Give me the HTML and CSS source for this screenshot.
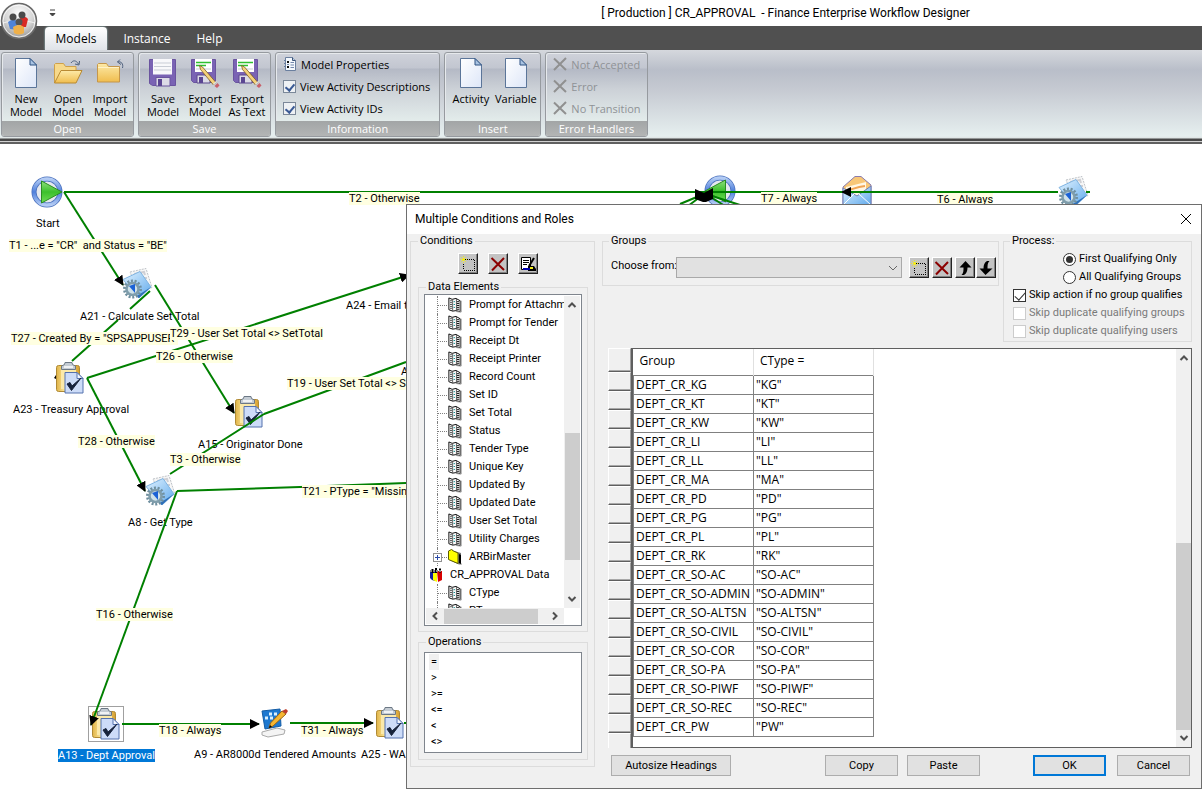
FILE: index.html
```html
<!DOCTYPE html>
<html lang="en">
<head>
<meta charset="utf-8">
<title>Finance Enterprise Workflow Designer</title>
<link rel="stylesheet" href="styles.css">
</head>
<body>
<svg class="defs" aria-hidden="true">
  <defs>
    <linearGradient id="gFolder" x1="0" y1="0" x2="0" y2="1"><stop offset="0" stop-color="#fdeaa8"/><stop offset="1" stop-color="#f0bd4e"/></linearGradient>
    <linearGradient id="gPage" x1="0" y1="0" x2="1" y2="1"><stop offset="0" stop-color="#fff"/><stop offset="1" stop-color="#dde6f8"/></linearGradient>
    <linearGradient id="gGreen" x1="0" y1="0" x2="0" y2="1"><stop offset="0" stop-color="#8fe07e"/><stop offset=".5" stop-color="#3cc02c"/><stop offset="1" stop-color="#6fdc55"/></linearGradient>
    <linearGradient id="gRing" x1="0" y1="0" x2="0" y2="1"><stop offset="0" stop-color="#b4ccf4"/><stop offset=".5" stop-color="#4f80dc"/><stop offset="1" stop-color="#b4ccf4"/></linearGradient>
    <linearGradient id="gBlue" x1="0" y1="0" x2="1" y2="1"><stop offset="0" stop-color="#e2f3ff"/><stop offset="1" stop-color="#5fa9ec"/></linearGradient>
    <linearGradient id="gGold" x1="0" y1="0" x2="1" y2="0"><stop offset="0" stop-color="#e0b347"/><stop offset=".35" stop-color="#fbe597"/><stop offset="1" stop-color="#d7a02f"/></linearGradient>
    <radialGradient id="gOrb" cx=".5" cy=".3" r=".75"><stop offset="0" stop-color="#fff"/><stop offset=".55" stop-color="#d4d4d4"/><stop offset="1" stop-color="#8b8b8b"/></radialGradient>
    <marker id="arrow" viewBox="0 0 10 10" refX="9" refY="5" markerWidth="10" markerHeight="10" markerUnits="userSpaceOnUse" orient="auto"><path d="M0 0 10 5 0 10Z"/></marker>

    <symbol id="page" viewBox="0 0 24 30"><path d="M1.500 .5h14.500l6.500 6.500v22.500h-21Z" fill="url(#gPage)" stroke="#5b7599"/><path d="M16 .5v6.500h6.500Z" fill="#a9c3e2" stroke="#2f5282"/></symbol>
    <symbol id="open" viewBox="0 0 30 30"><path d="M1.500 25V6.500l1-1h8l2 3h10.500v6" fill="#f7d98b" stroke="#cfa04a"/><path d="M1.500 25 8 12.500h21L23 25Z" fill="url(#gFolder)" stroke="#b98a33"/><path d="M18 5c2-3 5-3 7.500 1" fill="none" stroke="#4d607d"/><path d="m26.500 3-.5 4-4-1" fill="none" stroke="#4d607d"/></symbol>
    <symbol id="import" viewBox="0 0 30 30"><path d="M2.500 24V6.500l1-1h8l2 3h11V24Z" fill="url(#gFolder)" stroke="#c5964a"/><path d="M3 9.500h21" stroke="#fff2c6"/><path d="M22.500 4c4-1 6 2 5 6M25 1.500 22.500 4l3.500 2.500" fill="none" stroke="#4d607d"/></symbol>
    <symbol id="disk" viewBox="0 0 30 30"><path d="M1.500 1.500h26v26h-23l-3-2Z" fill="#7a63b4" stroke="#6a549f"/><path d="M5 1h19v15.500H5Z" fill="#f8f8fb"/><path d="M6 5h17M6 8.500h17M6 12h17" stroke="#c9cdd6"/><path d="M8 19.500h14V28H8Z" fill="#dcdbe6" stroke="#6a549f"/><path d="M10 21h4v7h-4Z" fill="#5b4692"/></symbol>
    <symbol id="diskpen" viewBox="0 0 30 30"><path d="M1.500 1.500h24v23h-22l-2-2Z" fill="#7a63b4" stroke="#6a549f"/><path d="M5 1h17v13H5Z" fill="#fff"/><path d="M6 4.500h15M6 7.500h10" stroke="#2fc02f" stroke-width="1.500"/><path d="M6 11h15" stroke="#c9cdd6"/><path d="M7 17h13v8H7Z" fill="#dcdbe6" stroke="#5d488f"/><path d="M9 19h4v6H9Z" fill="#5b4692"/><path d="m9.500 7.500 3 1.500L26 24.500 23.500 27 10.500 11.500Z" fill="#f5d27a" stroke="#7d5d25" stroke-width=".8"/><path d="m24.500 28 3-3 2 2.500-2.500 2.500Z" fill="#c9606a"/><path d="m23.500 26.500 3-3" stroke="#ddd" stroke-width="1.500"/></symbol>
    <symbol id="props" viewBox="0 0 14 14"><path d="M2.500 .5h7l3 3v10h-10Z" fill="#f4f8fd" stroke="#6a7f9f"/><path d="M9.500 .5v3h3" fill="#b8cbe2" stroke="#3e5578"/><path d="M4 5h2M4 10h2" stroke="#111" stroke-width="2"/><path d="M7.500 5.500h3.500M7.500 8h3.500M7.500 10.500h3.500M4 7.500h2" stroke="#7589ad"/><path d="M1 3.500h2M1 6.500h2M1 9.500h2" stroke="#687d9e"/></symbol>
    <symbol id="cross" viewBox="0 0 14 14"><path d="M1 1.500 13 13M13 1 1 13" stroke="#909090" stroke-width="2" fill="none"/></symbol>

    <symbol id="play" viewBox="0 0 32 32"><circle cx="16" cy="16" r="13" fill="#e4e8ee" stroke="#4a70bd" stroke-width="5"/><circle cx="16" cy="16" r="13" fill="none" stroke="url(#gRing)" stroke-width="3.500"/><path d="M10.500 5 31 16 10.500 27Z" fill="url(#gGreen)" stroke="#2a8d22"/></symbol>
    <symbol id="gear" viewBox="0 0 32 32"><path d="m8 4 16-3.500 6 19-13 5Z" fill="#f6f6f6" stroke="#bfc3c8" stroke-dasharray="2 1"/><path d="m12 6 10-2 1 3M20 10h5" fill="none" stroke="#cfcfd4" stroke-width="2"/><path d="M1 11.500 18 3.500l11 15.500-12 11Z" fill="url(#gBlue)" stroke="#7fb4e2"/><path d="m29 19-12 11-3-1.500Z" fill="#2e6fb8"/><circle cx="10.500" cy="21" r="8" fill="none" stroke="#6f8f9f" stroke-width="3" stroke-dasharray="2 1.590"/><circle cx="10.500" cy="21" r="6" fill="#cfe2ea" stroke="#7f9dab" stroke-width="2.500"/><path d="m7 18 6-2v9Z" fill="#1b62d6"/></symbol>
    <symbol id="clip" viewBox="0 0 32 32"><rect x="2.500" y="3.500" width="23" height="26" rx="2" fill="url(#gGold)" stroke="#b08a35"/><path d="M7 6h15v21H7Z" fill="#fbe9a9"/><path d="M7.500 7.500V4l3-1.500.5-2h7l.5 2 3 1.500v3.500Z" fill="#c4ccd4" stroke="#6c7885"/><path d="M10 5h9" stroke="#fff" stroke-width="1.500"/><path d="M11 10.500h12l6 6v14.500H11Z" fill="#cddcf8" stroke="#5572ae"/><path d="M23 10.500v6h6Z" fill="#f1f6ff" stroke="#5572ae"/><path d="m13 22 4.500 6.500L27 16l-9 8-2-3.500Z" fill="#17233b" stroke="#17233b"/></symbol>
    <symbol id="desk" viewBox="0 0 32 32"><path d="m2 4 18-2 1 17-16 3Z" fill="#1d78d0" stroke="#145ca5"/><path d="M9 7h3m2 0h3M5 11h3m2 0h3" stroke="#d9efff" stroke-width="3"/><path d="m2 25 15-4 8 2-1 4-16 3-6-2Z" fill="#f4f4f4" stroke="#a9a9a9"/><path d="m9 21 1.500-5L22 4l4 3-13 12Z" fill="#f6b632" stroke="#996619"/><path d="m22 4 4-2 2 2-2 3Z" fill="#bf3c2b"/><path d="m9 21 1-3 2 2Z"/></symbol>
    <symbol id="mail" viewBox="0 0 32 32"><path d="M2 12 14 1.500h6L30 10v20H2Z" fill="#f8c777" stroke="#8a7cae"/><path d="M5 12 25 7v14H5Z" fill="#fff7e4"/><path d="M6 15c6 0 7-3 18-4" fill="none" stroke="#f1a452" stroke-width="2"/><path d="M2 13l14 8 14-10v19H2Z" fill="url(#gBlue)" stroke="#6e7fb4"/><path d="m2 30 11-11M30 30 18 19" stroke="#fff"/></symbol>

    <symbol id="new" viewBox="0 0 16 16"><path d="M3 3.500h11.500V14H3.500V3" fill="none" stroke="#000" stroke-dasharray="1 1" shape-rendering="crispEdges"/><path d="M0 3.500h7M3.500 0v7M1 1l5 5M6 1 1 6" stroke="#f3ec1a" stroke-dasharray="1 1"/><path d="M2 3.500h3" stroke="#f3ec1a" stroke-width="2"/></symbol>
    <symbol id="del" viewBox="0 0 16 16"><path d="M1.500 2 14 14M14 2 2 14.500" stroke="#8b0000" stroke-width="2" fill="none"/></symbol>
    <symbol id="edit" viewBox="0 0 16 16"><path d="M1.500 1.500h9v12h-9Z" fill="#fff" stroke="#000"/><path d="M3 4.500h6M3 6.500h6M3 8.500h4" stroke="#000"/><path d="m14 2-5 8" stroke="#000" stroke-width="2"/><path d="M8 10h6l2 3v2H8Z"/><path d="M3 13h7" stroke="#0000b0" stroke-width="2"/><path d="M10 12h3" stroke="#f3ec1a" stroke-width="2"/></symbol>
    <symbol id="up" viewBox="0 0 16 16"><path d="m8.500 1 6 6.500h-4C10.500 11 9.500 13.500 7 15H4.500C6.500 13 6.500 11 6.500 7.500h-4Z"/></symbol>
    <symbol id="down" viewBox="0 0 16 16"><path d="m7.500 15-6-6.500h4C5.500 5 6.500 2.500 9 1h2.500C9.500 3 9.500 5 9.500 8.500h5Z"/></symbol>
    <symbol id="field" viewBox="0 0 14 17"><path d="M.5 1 4 2.500 8 1.500l4.500 2.500v11.500L8 14.500l-3.500.5-4-1.500Z" fill="#fff" stroke="#000"/><path d="M13.500 4v12l-5-.5" fill="none" stroke="#8a8a8a"/><path d="M4.500 2v13M8.500 2v13" stroke="#555"/><path d="M2 4h1.500M2 6h1.500M2 8h1.500M2 10h1.500M2 12h1.500M9 5h2.500M9 7h2.500M9 9h2.500M9 11h2.500M9 13h2.500" stroke="#000"/><path d="M5.500 5H7M5.500 8H7M5.500 11H7" stroke="#008b8b"/></symbol>
    <symbol id="yfolder" viewBox="0 0 14 16"><path d="m1 2 3-1.500 2 1.500 7 2v10l1 1.500H11L1 11Z" fill="#777"/><path d="m.5 2 3-1.500 2 1.500L10 4v10.500l-9.500-4Z" fill="#ff0" stroke="#5d5d00"/><path d="m11 5 2 1v9l-2-1Z"/></symbol>
    <symbol id="stack" viewBox="0 0 14 16"><path d="M1 5h5v9l-3-1-2-2Z" fill="#1620a0"/><path d="M4 6h4v9l-4-2Z" fill="#ff0"/><path d="M8 4h5v9l-4 2Z" fill="#d80000"/><path d="M3.500 2v4M7 1v5M11 1.500v4" stroke="#000" stroke-width="2"/><path d="M1 4h12" stroke="#888" stroke-width="2" stroke-dasharray="2 1"/></symbol>
    <symbol id="chev" viewBox="0 0 10 10"><path d="m1.500 3 3.500 3.500L8.500 3" fill="none" stroke="currentColor" stroke-width="2"/></symbol>
    <symbol id="thin" viewBox="0 0 10 10"><path d="M1 3 5 7l4-4" fill="none" stroke="currentColor"/></symbol>
  </defs>
</svg>

<header class="titlebar">
  <button class="quick" aria-label="Customize toolbar"><svg width="7" height="8" viewBox="0 0 7 8"><path d="M1 1h5M1 4.500h5L3.500 7Z" stroke="#444" fill="#444"/></svg></button>
  <h1 class="apptitle">[ Production ] CR_APPROVAL&nbsp; - Finance Enterprise Workflow Designer</h1>
  <button class="orb" aria-label="Application menu">
    <svg width="38" height="38" viewBox="0 0 38 38"><circle cx="19" cy="19" r="17.500" fill="url(#gOrb)" stroke="#696969" stroke-width="1.500"/><circle cx="19" cy="19" r="16" fill="none" stroke="#fff" stroke-opacity=".8"/><path d="M3 21c10-3 22-3 32 0" stroke="#fff" stroke-opacity=".7" fill="none"/><path d="M8 20q5-4 9-1v9l-7-1Z" fill="#4f83d8"/><path d="M20 16q5-3 8 1l-2 8h-5Z" fill="#d92a25"/><circle cx="13" cy="15" r="3.500" fill="#4a4a4a"/><circle cx="22" cy="13" r="3.500" fill="#4a4a4a"/><circle cx="19" cy="20" r="3.500" fill="#555"/><path d="M13 25q6-4 11 0v6q-5 3-10 0Z" fill="#efb04a"/></svg>
  </button>
</header>
<nav class="tabs">
  <button class="tab active">Models</button>
  <button class="tab">Instance</button>
  <button class="tab">Help</button>
</nav>
<section class="ribbon">
  <div class="group">
    <div class="tools">
      <button class="big"><svg class="i24"><use href="#page"/></svg>New<br>Model</button>
      <button class="big"><svg class="i30"><use href="#open"/></svg>Open<br>Model</button>
      <button class="big"><svg class="i30"><use href="#import"/></svg>Import<br>Model</button>
    </div>
    <h2 class="caption">Open</h2>
  </div>
  <div class="group">
    <div class="tools">
      <button class="big"><svg class="i30"><use href="#disk"/></svg>Save<br>Model</button>
      <button class="big"><svg class="i30"><use href="#diskpen"/></svg>Export<br>Model</button>
      <button class="big"><svg class="i30"><use href="#diskpen"/></svg>Export<br>As Text</button>
    </div>
    <h2 class="caption">Save</h2>
  </div>
  <div class="group">
    <div class="lines info">
      <button class="line"><svg class="i14"><use href="#props"/></svg>Model Properties</button>
      <label class="line"><input class="rcheck" type="checkbox" checked>View Activity Descriptions</label>
      <label class="line"><input class="rcheck" type="checkbox" checked>View Activity IDs</label>
    </div>
    <h2 class="caption">Information</h2>
  </div>
  <div class="group">
    <div class="tools">
      <button class="big wide"><svg class="i24"><use href="#page"/></svg>Activity</button>
      <button class="big wide"><svg class="i24"><use href="#page"/></svg>Variable</button>
    </div>
    <h2 class="caption">Insert</h2>
  </div>
  <div class="group">
    <div class="lines">
      <button class="line" disabled><svg class="i14"><use href="#cross"/></svg>Not Accepted</button>
      <button class="line" disabled><svg class="i14"><use href="#cross"/></svg>Error</button>
      <button class="line" disabled><svg class="i14"><use href="#cross"/></svg>No Transition</button>
    </div>
    <h2 class="caption">Error Handlers</h2>
  </div>
</section>

<main class="canvas">
  <span class="lbl n-start">Start</span>
  <span class="lbl n-a21">A21 - Calculate Set Total</span>
  <span class="lbl n-a24">A24 - Email the</span>
  <span class="lbl n-a23">A23 - Treasury Approval</span>
  <span class="lbl n-a">A</span>
  <span class="lbl n-a15">A15 - Originator Done</span>
  <span class="lbl n-a8">A8 - Get Type</span>
  <span class="lbl n-a9">A9 - AR8000d Tendered Amounts</span>
  <span class="lbl n-a25">A25 - WA</span>
  <svg class="scene" viewBox="0 144 1202 654" width="1202" height="654">
    <path d="M54 378 58 372V380Z"/>
    <g class="edges"><path class="plain" d="M150 291 130 309M118 320 72 361"/></g>
    <use href="#play" x="31" y="176" width="32" height="32"/>
    <use href="#gear" x="122" y="268" width="32" height="32"/>
    <use href="#clip" x="54" y="362" width="32" height="32"/>
    <use href="#clip" x="233" y="396" width="32" height="32"/>
    <use href="#gear" x="145" y="475" width="32" height="32"/>
    <rect x="88.500" y="706.500" width="35" height="35" fill="#fff" stroke="#a0a0a0"/>
    <use href="#clip" x="90" y="708" width="32" height="32"/>
    <use href="#desk" x="260" y="707" width="32" height="32"/>
    <use href="#clip" x="374" y="707" width="32" height="32"/>
    <g transform="translate(1440 0) scale(-1 1)"><use href="#play" x="704" y="175" width="32" height="32"/></g>
    <use href="#mail" x="841" y="175" width="32" height="32"/>
    <use href="#gear" x="1058" y="176" width="32" height="32"/>
    <g class="edges">
      <path class="plain" d="M64 192H706"/>
      <path d="M64 192 123 285"/>
      <path d="M155 285 234 413"/>
      <path d="M87 378 409 275"/>
      <path d="M87 378 145 491"/>
      <path d="M177 491 91 725"/>
      <path d="M122 724H259"/>
      <path d="M290 723H373"/>
      <path d="M1058 192H842"/>
      <path class="plain" d="M264 414 406 362M264 414 170 474M177 491 300 487 406 483M1086 192H1090M842 192H700M704 194 680 204M704 194 688 206M706 194 740 205M706 194 725 206M404 723H408"/>
    </g>
    <path d="m695 189 9 4 9-5v11l-7 3h-3l-8-3Z"/>
  </svg>
  <span class="lbl edge e-t1">T1 - ...e = "CR"&nbsp; and Status = "BE"</span>
  <span class="lbl edge e-t2">T2 - Otherwise</span>
  <span class="lbl edge e-t27">T27 - Created By = "SPSAPPUSER"</span>
  <span class="lbl edge e-t29">T29 - User Set Total &lt;&gt; SetTotal</span>
  <span class="lbl edge e-t26">T26 - Otherwise</span>
  <span class="lbl edge e-t19">T19 - User Set Total &lt;&gt; Set</span>
  <span class="lbl edge e-t28">T28 - Otherwise</span>
  <span class="lbl edge e-t3">T3 - Otherwise</span>
  <span class="lbl edge e-t21">T21 - PType = "Missing</span>
  <span class="lbl edge e-t16">T16 - Otherwise</span>
  <span class="lbl edge e-t18">T18 - Always</span>
  <span class="lbl edge e-t31">T31 - Always</span>
  <span class="lbl edge e-t7">T7 - Always</span>
  <span class="lbl edge e-t6">T6 - Always</span>
  <span class="lbl selected n-a13">A13 - Dept Approval</span>
</main>

<section class="dialog" role="dialog" aria-labelledby="dlgTitle">
  <div class="dlghead">
    <h2 class="dlgtitle" id="dlgTitle">Multiple Conditions and Roles</h2>
    <button class="close" aria-label="Close"><svg width="12" height="12" viewBox="0 0 12 12"><path d="m1 1 10 10M11 1 1 11" stroke="#000" fill="none"/></svg></button>
  </div>
  <div class="dlgbody">
    <fieldset class="box conditions">
      <legend>Conditions</legend>
      <div class="iconrow">
        <button class="ibtn" aria-label="New condition"><svg class="i16"><use href="#new"/></svg></button>
        <button class="ibtn" aria-label="Delete condition"><svg class="i16"><use href="#del"/></svg></button>
        <button class="ibtn" aria-label="Edit condition"><svg class="i16"><use href="#edit"/></svg></button>
      </div>
      <fieldset class="box inner">
        <legend>Data Elements</legend>
        <div class="tree">
          <ul class="items">
            <li class="leaf"><svg class="fi"><use href="#field"/></svg>Prompt for Attachment</li>
            <li class="leaf"><svg class="fi"><use href="#field"/></svg>Prompt for Tender</li>
            <li class="leaf"><svg class="fi"><use href="#field"/></svg>Receipt Dt</li>
            <li class="leaf"><svg class="fi"><use href="#field"/></svg>Receipt Printer</li>
            <li class="leaf"><svg class="fi"><use href="#field"/></svg>Record Count</li>
            <li class="leaf"><svg class="fi"><use href="#field"/></svg>Set ID</li>
            <li class="leaf"><svg class="fi"><use href="#field"/></svg>Set Total</li>
            <li class="leaf"><svg class="fi"><use href="#field"/></svg>Status</li>
            <li class="leaf"><svg class="fi"><use href="#field"/></svg>Tender Type</li>
            <li class="leaf"><svg class="fi"><use href="#field"/></svg>Unique Key</li>
            <li class="leaf"><svg class="fi"><use href="#field"/></svg>Updated By</li>
            <li class="leaf"><svg class="fi"><use href="#field"/></svg>Updated Date</li>
            <li class="leaf"><svg class="fi"><use href="#field"/></svg>User Set Total</li>
            <li class="leaf"><svg class="fi"><use href="#field"/></svg>Utility Charges</li>
            <li class="leaf last"><button class="expand" aria-label="Expand ARBirMaster"></button><svg class="fi"><use href="#yfolder"/></svg>ARBirMaster</li>
            <li class="root"><svg class="fi"><use href="#stack"/></svg>CR_APPROVAL Data</li>
            <li class="leaf"><svg class="fi"><use href="#field"/></svg>CType</li>
            <li class="leaf"><svg class="fi"><use href="#field"/></svg>PType</li>
          </ul>
          <div class="vbar"><svg class="i10 flip"><use href="#chev"/></svg><span class="vthumb"></span><svg class="i10"><use href="#chev"/></svg></div>
          <div class="hbar"><svg class="i10 toleft"><use href="#chev"/></svg><span class="hthumb"></span><svg class="i10 toright"><use href="#chev"/></svg></div>
        </div>
      </fieldset>
      <fieldset class="box inner ops">
        <legend>Operations</legend>
        <ul class="oplist">
          <li><span class="picked">=</span></li><li><span>&gt;</span></li><li><span>&gt;=</span></li><li><span>&lt;=</span></li><li><span>&lt;</span></li><li><span>&lt;&gt;</span></li>
        </ul>
      </fieldset>
    </fieldset>

    <div class="side">
      <div class="top">
        <fieldset class="box groups">
          <legend>Groups</legend>
          <div class="chooser">
            <label for="choose">Choose from:</label>
            <span class="combo"><select id="choose" disabled><option></option></select><svg class="i10"><use href="#thin"/></svg></span>
            <button class="ibtn" aria-label="New group"><svg class="i16"><use href="#new"/></svg></button>
            <button class="ibtn" aria-label="Delete group"><svg class="i16"><use href="#del"/></svg></button>
            <button class="ibtn near" aria-label="Move up"><svg class="i16"><use href="#up"/></svg></button>
            <button class="ibtn last" aria-label="Move down"><svg class="i16"><use href="#down"/></svg></button>
          </div>
        </fieldset>
        <fieldset class="box process">
          <legend>Process:</legend>
          <label class="opt radio"><input type="radio" name="mode" checked>First Qualifying Only</label>
          <label class="opt radio"><input type="radio" name="mode">All Qualifying Groups</label>
          <label class="opt"><input type="checkbox" checked>Skip action if no group qualifies</label>
          <label class="opt off"><input type="checkbox" disabled>Skip duplicate qualifying groups</label>
          <label class="opt off"><input type="checkbox" disabled>Skip duplicate qualifying users</label>
        </fieldset>
      </div>
      <div class="grid">
        <div class="selectors" aria-hidden="true"><i class="head"></i><i></i><i></i><i></i><i></i><i></i><i></i><i></i><i></i><i></i><i></i><i></i><i></i><i></i><i></i><i></i><i></i><i></i><i></i><i></i><i class="end"></i></div>
        <div class="sheet">
          <table>
            <thead><tr><th>Group</th><th>CType =</th></tr></thead>
            <tbody>
              <tr><td>DEPT_CR_KG</td><td>"KG"</td></tr>
              <tr><td>DEPT_CR_KT</td><td>"KT"</td></tr>
              <tr><td>DEPT_CR_KW</td><td>"KW"</td></tr>
              <tr><td>DEPT_CR_LI</td><td>"LI"</td></tr>
              <tr><td>DEPT_CR_LL</td><td>"LL"</td></tr>
              <tr><td>DEPT_CR_MA</td><td>"MA"</td></tr>
              <tr><td>DEPT_CR_PD</td><td>"PD"</td></tr>
              <tr><td>DEPT_CR_PG</td><td>"PG"</td></tr>
              <tr><td>DEPT_CR_PL</td><td>"PL"</td></tr>
              <tr><td>DEPT_CR_RK</td><td>"RK"</td></tr>
              <tr><td>DEPT_CR_SO-AC</td><td>"SO-AC"</td></tr>
              <tr><td>DEPT_CR_SO-ADMIN</td><td>"SO-ADMIN"</td></tr>
              <tr><td>DEPT_CR_SO-ALTSN</td><td>"SO-ALTSN"</td></tr>
              <tr><td>DEPT_CR_SO-CIVIL</td><td>"SO-CIVIL"</td></tr>
              <tr><td>DEPT_CR_SO-COR</td><td>"SO-COR"</td></tr>
              <tr><td>DEPT_CR_SO-PA</td><td>"SO-PA"</td></tr>
              <tr><td>DEPT_CR_SO-PIWF</td><td>"SO-PIWF"</td></tr>
              <tr><td>DEPT_CR_SO-REC</td><td>"SO-REC"</td></tr>
              <tr><td>DEPT_CR_PW</td><td>"PW"</td></tr>
            </tbody>
          </table>
          <div class="vbar tall"><svg class="i10 flip"><use href="#chev"/></svg><span class="vthumb"></span><svg class="i10"><use href="#chev"/></svg></div>
        </div>
      </div>
      <div class="actions">
        <button class="btn autosize">Autosize Headings</button>
        <button class="btn copy">Copy</button>
        <button class="btn">Paste</button>
        <button class="btn ok">OK</button>
        <button class="btn">Cancel</button>
      </div>
    </div>
  </div>
</section>
</body>
</html>
```
FILE: styles.css
```css
* { box-sizing: border-box; }
body {
  margin: 0;
  min-height: 100vh;
  display: flex;
  flex-direction: column;
  position: relative;
  background: #fff;
  color: #000;
  font: 11px/14px Roboto, "Liberation Sans", sans-serif;
  overflow: hidden;
}
button, select { font: inherit; color: inherit; }
button { border: 0; padding: 0; background: none; }
h1, h2 { margin: 0; font-weight: normal; }
ul { margin: 0; padding: 0; list-style: none; }
svg { display: block; flex: none; }
.defs { position: absolute; width: 0; height: 0; }
.i10 { width: 10px; height: 10px; }
.i14 { width: 14px; height: 14px; }
.i16 { width: 16px; height: 16px; }
.i24 { width: 24px; height: 30px; }
.i30 { width: 30px; height: 30px; }

/* window title */
.titlebar { height: 26px; display: flex; align-items: center; position: relative; }
.quick { margin-left: 49px; }
.apptitle { flex: 1; margin-left: 313px; text-align: center; font: 12px/16px Roboto, sans-serif; }
.orb { position: absolute; left: 0; top: 2px; z-index: 2; }

/* tabs and ribbon */
.tabs { display: flex; height: 24px; padding: 1px 0 0 45px; background: #505050; }
.tab { width: 80px; color: #fff; font: 12px/24px "Open Sans", sans-serif; }
.tab + .tab + .tab { width: 45px; }
.tab.active { width: 62px; color: #000; background: linear-gradient(#fff, #dfe3e8); border-radius: 4px 4px 0 0; box-shadow: 0 0 2px #b8e6ea; }
.ribbon {
  display: flex;
  gap: 4px;
  height: 94px;
  padding: 2px 1px 7px;
  background: linear-gradient(#d5d8dd, #b9bec9 20px, #c6cad2 40px, #e6efef 86px, #dfe5e5 88px, #484848 89px, #484848 91px, #d0d0d0 91px, #d0d0d0 92px, #606060 92px);
  font: 11px/13px "Open Sans", sans-serif;
}
.group {
  display: flex;
  flex-direction: column;
  border: 1px solid #969a9f;
  border-radius: 3px;
  box-shadow: inset 1px 1px 0 #e6e9ec;
  background: linear-gradient(#cfd2da, #c2c6d0 15px, #b4b9c5 16px, #ccd1d7 36px, #e3eceb 68px);
  overflow: hidden;
}
.tools { flex: 1; display: flex; align-items: flex-start; padding: 5px 2px 0 3px; }
.big { width: 42px; text-align: center; }
.big svg { margin: 0 auto 4px; }
.wide { width: 45px; }
.caption { height: 15px; background: linear-gradient(#a2a5a6, #b3b5b5); color: #fff; font-size: 11px; line-height: 15px; text-align: center; }
.lines { flex: 1; display: flex; flex-direction: column; gap: 8px; padding: 4px 6px 0 7px; }
.info { padding-right: 9px; }
.line { display: flex; align-items: center; gap: 4px; height: 14px; white-space: nowrap; }
.line:disabled { color: #8f9296; }
.rcheck { appearance: none; width: 13px; height: 13px; margin: 0; border: 1px solid #7b8899; background: #eef1f4; display: grid; place-items: center; }
.rcheck:checked::after { content: ""; width: 4px; height: 7px; border: solid #3a5a95; border-width: 0 2px 2px 0; transform: rotate(40deg); }

/* diagram canvas */
.canvas { flex: 1; position: relative; overflow: hidden; }
.scene { position: absolute; left: 0; top: 0; }
.edges { fill: none; stroke: #008000; stroke-width: 2; }
.edges path { marker-end: url(#arrow); }
.edges .plain { marker-end: none; }
.lbl { position: absolute; white-space: nowrap; line-height: 13px; }
.edge { background: #ffffe1; }
.selected { background: #0078d7; color: #fff; }
.n-start { left: 36px; top: 73px; }
.n-a21 { left: 80px; top: 166px; }
.n-a24 { left: 346px; top: 155px; }
.n-a23 { left: 13px; top: 259px; }
.n-a { left: 401px; top: 221px; }
.n-a15 { left: 198px; top: 294px; }
.n-a8 { left: 128px; top: 372px; }
.n-a9 { left: 194px; top: 604px; }
.n-a25 { left: 361px; top: 604px; }
.n-a13 { left: 58px; top: 605px; }
.e-t1 { left: 9px; top: 95px; }
.e-t2 { left: 349px; top: 48px; }
.e-t27 { left: 11px; top: 188px; }
.e-t29 { left: 170px; top: 183px; }
.e-t26 { left: 156px; top: 206px; }
.e-t19 { left: 287px; top: 233px; }
.e-t28 { left: 78px; top: 291px; }
.e-t3 { left: 170px; top: 309px; }
.e-t21 { left: 302px; top: 341px; }
.e-t16 { left: 96px; top: 464px; }
.e-t18 { left: 159px; top: 580px; }
.e-t31 { left: 301px; top: 580px; }
.e-t7 { left: 761px; top: 48px; }
.e-t6 { left: 937px; top: 49px; }

/* dialog window */
.dialog { position: absolute; left: 406px; right: 0; top: 204px; border: 1px solid #6e6e6e; background: #f0f0f0; }
.dlghead { display: flex; align-items: center; justify-content: space-between; height: 29px; padding: 0 9px 2px 8px; background: #fff; }
.dlgtitle { font: 12px/16px Roboto, sans-serif; }
.dlgbody { display: flex; gap: 7px; padding: 0 9px 12px 3px; }
.box { margin: 0; padding: 0; border: 1px solid #dcdcdc; min-width: 0; }
.box > legend { margin-left: 6px; padding: 0 2px; line-height: 14px; }
.conditions { width: 185px; flex: none; padding: 0 6px 6px 7px; align-self: flex-start; }
.conditions > legend { margin-left: 0; }
.iconrow { display: flex; gap: 10px; padding: 5px 0 6px 40px; }
.ibtn { width: 20px; height: 21px; display: grid; place-items: center; background: #c3c3c3; border: 1px solid; border-color: #fff #222 #222 #fff; box-shadow: inset -1px -1px 0 #808080; }
.inner { padding: 0 5px 5px; }
.inner > legend { margin-left: 2px; }
.ops { margin-top: 3px; padding: 3px 5px 6px; }
.tree { height: 332px; padding: 1px; border: 1px solid #7f858d; background: #fff; display: grid; grid-template: 1fr 16px / 1fr 16px; }
.items { overflow: hidden; min-height: 0; min-width: 0; }
.items li { position: relative; display: flex; align-items: center; gap: 7px; height: 18px; white-space: nowrap; }
.fi { width: 14px; height: 16px; }
.items .leaf { padding-left: 22px; }
.items .leaf::before { content: ""; position: absolute; left: 11px; top: 0; bottom: 0; width: 10px; border-left: 1px dotted #808080; background: linear-gradient(90deg, #808080 50%, transparent 50%) 0 9px / 2px 1px repeat-x; }
.items .root { padding-left: 3px; gap: 7px; }
.expand { position: absolute; left: 7px; top: 5px; width: 9px; height: 9px; border: 1px solid #919191; background: linear-gradient(#2a4aa8, #2a4aa8) center / 5px 1px no-repeat, linear-gradient(#2a4aa8, #2a4aa8) center / 1px 5px no-repeat, #fff; }
.vbar { display: flex; flex-direction: column; align-items: center; padding: 4px 0; background: #f0f0f0; color: #505050; }
.vbar svg:last-child { margin-top: auto; }
.vthumb { width: 15px; flex: 0 0 127px; margin-top: 123px; background: #cdcdcd; }
.hbar { display: flex; align-items: center; justify-content: space-between; padding: 0 4px; background: #f0f0f0; color: #505050; }
.hthumb { height: 15px; flex: 0 0 94px; margin-right: 8px; background: #cdcdcd; }
.flip { transform: rotate(180deg); }
.toleft { transform: rotate(90deg); }
.toright { transform: rotate(-90deg); }
.oplist { height: 101px; padding: 1px 4px; border: 1px solid #7f858d; background: #fff; }
.oplist li { line-height: 16px; }
.oplist span { display: inline-block; padding: 0 2px; }
.picked { background: #f0f0f0; }

.side { flex: 1; min-width: 0; }
.top { display: flex; align-items: flex-start; gap: 4px; height: 114px; }
.groups { flex: 1; padding: 9px 2px 7px 0; }
.chooser { display: flex; align-items: center; padding-left: 8px; }
.chooser label { width: 61px; padding-bottom: 4px; white-space: nowrap; }
.combo { flex: 1; display: flex; align-items: center; margin: 0 7px 0 4px; height: 21px; padding-right: 3px; background: #e1e1e1; border: 1px solid #a9a9a9; color: #666; }
.combo select { flex: 1; min-width: 0; height: 19px; appearance: none; border: 0; background: transparent; }
.chooser .ibtn { margin-right: 3px; }
.chooser .near { margin-right: 1px; }
.chooser .last { margin-right: 0; }
.process { width: 189px; flex: none; padding: 2px 0 1px; }
.opt { display: flex; align-items: center; gap: 3px; height: 18px; padding-left: 9px; white-space: nowrap; }
.radio { padding-left: 59px; }
.off { color: #7a7a7a; }
.opt input { appearance: none; width: 13px; height: 13px; margin: 0; border: 1px solid #333; background: #fff; display: grid; place-items: center; }
.opt input[type="radio"] { border-radius: 50%; }
.opt input[type="radio"]:checked::after { content: ""; width: 7px; height: 7px; border-radius: 50%; background: #333; }
.opt input[type="checkbox"]:checked::after { content: ""; width: 5px; height: 9px; border: solid #333; border-width: 0 1px 1px 0; transform: rotate(42deg); }
.opt input:disabled { border-color: #ccc; }

.grid { display: flex; padding-left: 6px; height: 400px; }
.selectors { width: 23px; overflow: hidden; }
.selectors i { display: block; height: 19px; border: 1px solid; border-color: #fff #a0a0a0 #5f5f5f #fff; box-shadow: inset 0 -1px 0 #a8a8a8; }
.selectors .head { height: 24px; }
.selectors .end { border-bottom: 0; box-shadow: none; }
.sheet { flex: 1; display: flex; align-items: flex-start; justify-content: space-between; border: 1px solid #5f5f5f; border-left-width: 2px; background: #fff; font: 12px/16px "Open Sans", sans-serif; }
table { border-collapse: collapse; table-layout: fixed; width: 241px; }
th { height: 26px; padding: 0 6px 2px; font-weight: normal; text-align: left; border-right: 1px solid #e0e0e0; }
td { height: 19px; padding: 0 2px; line-height: 16px; border: 1px solid #808080; white-space: nowrap; }
.tall { align-self: stretch; width: 15px; padding: 4px 0; }
.tall .vthumb { flex: 0 0 187px; margin-top: 180px; }

.actions { display: flex; gap: 9px; padding: 7px 2px 0 9px; }
.btn { width: 73px; height: 21px; background: #e1e1e1; border: 1px solid #adadad; }
.autosize { width: 120px; }
.copy { margin-left: auto; }
.ok { margin-left: 44px; margin-right: 2px; border: 2px solid #0078d7; }
```
